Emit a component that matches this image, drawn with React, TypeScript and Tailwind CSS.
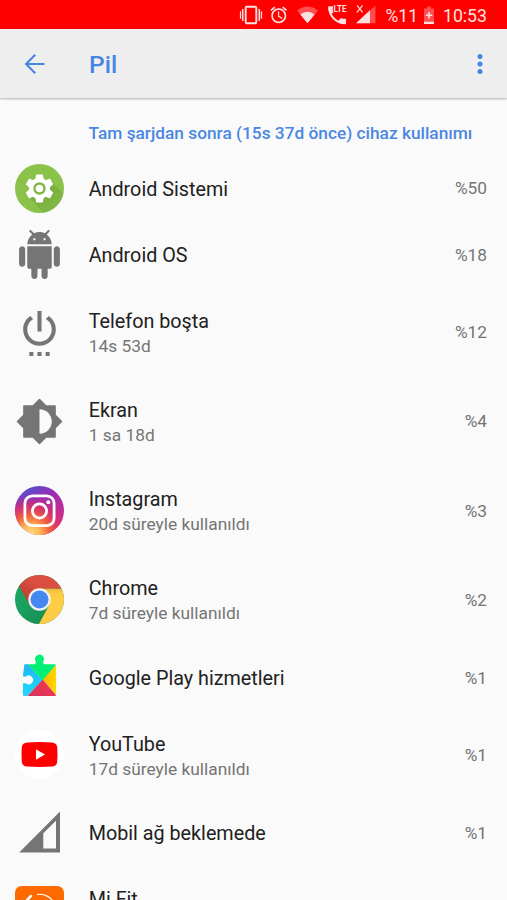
import type { ReactNode } from "react";

interface IUsage {
    name: string,
    percent?: string,
    detail?: string,
    icon: ReactNode,
}

const Gear = () => (
    <svg viewBox="0 0 49 49" className="size-[49px]">
        <defs>
            <linearGradient id="gearShadow" x1="0.3" y1="0.3" x2="0.8" y2="0.9">
                <stop offset="0" stopColor="#689f38" />
                <stop offset="1" stopColor="#7cb342" />
            </linearGradient>
        </defs>
        <circle cx="24.5" cy="24.5" r="24.5" fill="#8bc34a" />
        <path d="M15 34 L28.5 48.6 A24.5 24.5 0 0 0 48.5 29.5 L36.5 18 Z" fill="url(#gearShadow)" opacity="0.6" />
        <g transform="translate(7.7 7.7) scale(1.4)">
            <path
                fill="#fff"
                d="M19.43 12.98c.04-.32.07-.64.07-.98s-.03-.66-.07-.98l2.11-1.65c.19-.15.24-.42.12-.64l-2-3.46c-.12-.22-.39-.3-.61-.22l-2.49 1c-.52-.4-1.08-.73-1.69-.98l-.38-2.65C14.46 2.18 14.25 2 14 2h-4c-.25 0-.46.18-.49.42l-.38 2.65c-.61.25-1.17.59-1.69.98l-2.49-1c-.23-.09-.49 0-.61.22l-2 3.46c-.13.22-.07.49.12.64l2.11 1.65c-.04.32-.07.65-.07.98s.03.66.07.98l-2.11 1.65c-.19.15-.24.42-.12.64l2 3.46c.12.22.39.3.61.22l2.49-1c.52.4 1.08.73 1.69.98l.38 2.65c.03.24.24.42.49.42h4c.25 0 .46-.18.49-.42l.38-2.65c.61-.25 1.17-.59 1.69-.98l2.49 1c.23.09.49 0 .61-.22l2-3.46c.12-.22.07-.49-.12-.64l-2.11-1.65z"
            />
        </g>
        <circle cx="24.5" cy="24.5" r="5" fill="#fff" stroke="#7fb63f" strokeWidth="2.4" />
    </svg>
)

const Robot = () => (
    <svg viewBox="0 0 24 24" className="size-[49px] fill-[#757575]">
        <path d="M6 18c0 .55.45 1 1 1h1v3.5c0 .83.67 1.5 1.5 1.5s1.5-.67 1.5-1.5V19h2v3.5c0 .83.67 1.5 1.5 1.5s1.5-.67 1.5-1.5V19h1c.55 0 1-.45 1-1V8H6v10zM3.5 8C2.67 8 2 8.67 2 9.5v7c0 .83.67 1.5 1.5 1.5S5 17.33 5 16.5v-7C5 8.67 4.33 8 3.5 8zm17 0c-.83 0-1.5.67-1.5 1.5v7c0 .83.67 1.5 1.5 1.5s1.5-.67 1.5-1.5v-7c0-.83-.67-1.5-1.5-1.5zm-4.97-5.84l1.3-1.3c.2-.2.2-.51 0-.71-.2-.2-.51-.2-.71 0l-1.48 1.48C13.85 1.23 12.95 1 12 1c-.96 0-1.86.23-2.66.63L7.85.15c-.2-.2-.51-.2-.71 0-.2.2-.2.51 0 .71l1.31 1.31C6.97 3.26 6 5.01 6 7h12c0-1.99-.97-3.75-2.47-4.84zM10 5H9V4h1v1zm5 0h-1V4h1v1z" />
    </svg>
)

const Power = () => (
    <svg viewBox="0 0 24 24" className="size-[49px] fill-[#757575]">
        <path d="M7 24h2v-2H7v2zm4 0h2v-2h-2v2zm2-22h-2v10h2V2zm3.56 2.44l-1.45 1.45C16.84 6.94 18 8.83 18 11c0 3.31-2.69 6-6 6s-6-2.69-6-6c0-2.17 1.16-4.06 2.88-5.12L7.44 4.44C5.36 5.88 4 8.28 4 11c0 4.42 3.58 8 8 8s8-3.58 8-8c0-2.72-1.36-5.12-3.44-6.56zM15 24h2v-2h-2v2z" />
    </svg>
)

const Brightness = () => (
    <svg viewBox="0 0 24 24" className="size-[49px] fill-[#757575]">
        <path
            stroke="#757575"
            strokeWidth="0.8"
            strokeLinejoin="round"
            d="M19.6 15.15L22.75 12 19.6 8.85V4.4h-4.45L12 1.25 8.85 4.4H4.4v4.45L1.25 12 4.4 15.15V19.6h4.45L12 22.75 15.15 19.6H19.6z"
        />
        <path className="fill-[#fafafa]" d="M12 18V6c3.31 0 6 2.69 6 6s-2.69 6-6 6z" />
    </svg>
)

const Instagram = () => (
    <svg viewBox="0 0 49 49" className="size-[49px]">
        <defs>
            <linearGradient id="igBase" x1="0.2" y1="0" x2="0.75" y2="0.9">
                <stop offset="0" stopColor="#4a55d0" />
                <stop offset="0.4" stopColor="#9c2cb4" />
                <stop offset="1" stopColor="#d62e80" />
            </linearGradient>
            <radialGradient id="igWarm" cx="0.32" cy="1" r="0.85">
                <stop offset="0" stopColor="#ffe08a" />
                <stop offset="0.22" stopColor="#fdbd58" />
                <stop offset="0.45" stopColor="#f4663f" />
                <stop offset="0.72" stopColor="#dc2f68" stopOpacity="0.8" />
                <stop offset="1" stopColor="#b32ba5" stopOpacity="0" />
            </radialGradient>
        </defs>
        <circle cx="24.5" cy="24.5" r="24.5" fill="url(#igBase)" />
        <circle cx="24.5" cy="24.5" r="24.5" fill="url(#igWarm)" />
        <g fill="none" stroke="#fff" strokeWidth="2.8">
            <rect x="9.9" y="9.9" width="29.2" height="29.8" rx="7.5" />
            <circle cx="24.5" cy="25" r="7.1" />
        </g>
        <circle cx="33.3" cy="16.3" r="2" fill="#fff" />
    </svg>
)

const Chrome = () => (
    <svg viewBox="0 0 49 49" className="size-[49px]">
        <defs>
            <clipPath id="chromeClip">
                <circle cx="24.5" cy="24.5" r="24.5" />
            </clipPath>
            <linearGradient id="chromeRed" x1="0" y1="0.6" x2="0.6" y2="0">
                <stop offset="0" stopColor="#bb3e32" />
                <stop offset="0.6" stopColor="#db4e40" />
            </linearGradient>
            <linearGradient id="chromeGreen" x1="0.4" y1="0.3" x2="0.9" y2="0.8">
                <stop offset="0" stopColor="#1ba260" />
                <stop offset="1" stopColor="#168a50" />
            </linearGradient>
            <linearGradient id="chromeYellow" x1="0" y1="0" x2="0" y2="1">
                <stop offset="0" stopColor="#e8b83e" />
                <stop offset="0.15" stopColor="#ffcd45" />
            </linearGradient>
        </defs>
        <g clipPath="url(#chromeClip)">
            <rect width="49" height="49" fill="url(#chromeGreen)" />
            <path d="M24.5 13.4H49V49H24L34.2 30z" fill="url(#chromeYellow)" />
            <path d="M0 0H49V13.4H24.5L14.8 30 3.5 10.5z" fill="url(#chromeRed)" />
        </g>
        <circle cx="24.5" cy="24.5" r="11.2" fill="#f1f1f1" />
        <circle cx="24.5" cy="24.5" r="9" fill="#4688f1" />
    </svg>
)

const Puzzle = () => (
    <svg viewBox="0 0 49 49" className="size-[49px]">
        <defs>
            <clipPath id="puzzleClip">
                <path d="M9.4 11.2H19.8C21 10.4 21.2 9.3 20.6 8.3A4.5 4.5 0 1 1 28.4 8.3C27.8 9.3 28 10.4 29.2 11.2H39.6A1.5 1.5 0 0 1 41.1 12.7V41.6A1.5 1.5 0 0 1 39.6 43.1H9.4A1.5 1.5 0 0 1 7.9 41.6V30.8C8.8 29.8 10 29.9 11 30.6A4.5 4.5 0 1 0 11 23.2C10 23.9 8.8 24 7.9 23Z" />
            </clipPath>
            <linearGradient id="puzzleBlue" x1="0" y1="0" x2="0" y2="1">
                <stop offset="0" stopColor="#21b5f5" />
                <stop offset="1" stopColor="#1fdcfd" />
            </linearGradient>
            <linearGradient id="puzzleRed" x1="1" y1="0" x2="0" y2="1">
                <stop offset="0" stopColor="#fb3a46" />
                <stop offset="1" stopColor="#cf3263" />
            </linearGradient>
            <linearGradient id="puzzleYellow" x1="0" y1="0" x2="1" y2="0">
                <stop offset="0" stopColor="#ffb400" />
                <stop offset="1" stopColor="#ffdc00" />
            </linearGradient>
        </defs>
        <g clipPath="url(#puzzleClip)">
            <path d="M7 10H12L27.8 27.2 10 45H7z" fill="url(#puzzleBlue)" />
            <path d="M42 11L27.8 26.3 42 43z" fill="url(#puzzleYellow)" />
            <path d="M11 44.5L27.8 26.4 43 44.5z" fill="url(#puzzleRed)" />
            <path d="M13 0H45L41.5 11.2 27.5 27.2 13 11.6z" fill="#04ef76" />
        </g>
    </svg>
)

const YouTube = () => (
    <svg viewBox="0 0 49 49" className="size-[49px]">
        <circle cx="24.5" cy="24.5" r="24.5" fill="#fff" />
        <path d="M12 12.4Q24.5 11.6 37 12.4Q41.8 12.8 42.2 17.2Q42.7 24.5 42.2 31.8Q41.8 36.2 37 36.6Q24.5 37.4 12 36.6Q7.2 36.2 6.8 31.8Q6.3 24.5 6.8 17.2Q7.2 12.8 12 12.4Z" fill="#f00" />
        <path d="M21 19.3L30 24.5 21 29.7z" fill="#fff" />
    </svg>
)

const Signal = () => (
    <svg viewBox="0 0 49 49" className="size-[49px]">
        <path fill="#757575" fillRule="evenodd" d="M4.2 44.5H45V3.5zM28.3 25.2L41 12.8V40.4H28.3z" />
    </svg>
)

const MiFit = () => (
    <svg viewBox="0 0 49 49" className="size-[49px]">
        <rect width="49" height="49" rx="6.5" fill="#ff6a00" />
        <path d="M22 8.500A16 16 0 0 1 40 19.500" fill="none" stroke="#fff" strokeWidth="1.2" />
        <path d="M15.8 10.2Q9 16 8.5 25" fill="none" stroke="#fff" strokeWidth="2.8" strokeLinecap="round" />
    </svg>
)

const usage: IUsage[] = [
    { name: "Android Sistemi", percent: "%50", icon: <Gear /> },
    { name: "Android OS", percent: "%18", icon: <Robot /> },
    { name: "Telefon boşta", detail: "14s 53d", percent: "%12", icon: <Power /> },
    { name: "Ekran", detail: "1 sa 18d", percent: "%4", icon: <Brightness /> },
    { name: "Instagram", detail: "20d süreyle kullanıldı", percent: "%3", icon: <Instagram /> },
    { name: "Chrome", detail: "7d süreyle kullanıldı", percent: "%2", icon: <Chrome /> },
    { name: "Google Play hizmetleri", percent: "%1", icon: <Puzzle /> },
    { name: "YouTube", detail: "17d süreyle kullanıldı", percent: "%1", icon: <YouTube /> },
    { name: "Mobil ağ beklemede", percent: "%1", icon: <Signal /> },
    { name: "Mi Fit", detail: "", icon: <MiFit /> },
]

function StatusBar() {
    return (
        <div className="flex h-[29px] shrink-0 items-center bg-[#ff0000] pl-[239px] text-[#ffe0e0]">
            {/* vibrate, alarm, wifi, call, signal */}
            <svg viewBox="0 0 138 29" className="h-[29px] w-[138px] shrink-0" fill="currentColor">
                <rect x="6.7" y="6.7" width="10.6" height="16.6" rx="1" fill="none" stroke="currentColor" strokeWidth="1.9" />
                <path d="M3 9h1.5v12H3zM.9 11.3h1.3v7.4H.9zM19.5 9H21v12h-1.5zM21.8 11.3h1.3v7.4h-1.3z" />
                <g transform="translate(29.8 4.9) scale(0.83)">
                    <path d="M22 5.72l-4.6-3.86-1.29 1.53 4.6 3.86L22 5.72zM7.88 3.39L6.6 1.86 2 5.71l1.29 1.53 4.59-3.85zM12.5 8H11v6l4.75 2.85.75-1.23-4-2.37V8zM12 4c-4.97 0-9 4.03-9 9s4.02 9 9 9c4.97 0 9-4.03 9-9s-4.03-9-9-9zm0 16c-3.87 0-7-3.13-7-7s3.13-7 7-7 7 3.13 7 7-3.13 7-7 7z" />
                </g>
                <path opacity="0.35" d="M58 10.5Q68.5 2.5 79 10.5L68.5 23.3z" />
                <path d="M61.3 14.5Q68.5 9.2 75.7 14.5L68.5 23.3z" />
                <g transform="translate(86.1 3.3) scale(1)">
                    <path d="M20 15.5c-1.25 0-2.45-.2-3.57-.57-.35-.11-.74-.03-1.02.24l-2.2 2.2c-2.83-1.44-5.15-3.75-6.59-6.59l2.2-2.21c.28-.26.36-.65.25-1C8.7 6.45 8.5 5.25 8.5 4c0-.55-.45-1-1-1H4c-.55 0-1 .45-1 1 0 9.39 7.61 17 17 17 .55 0 1-.45 1-1v-3.5c0-.55-.45-1-1-1z" />
                </g>
                <rect x="93.9" y="4.5" width="14" height="7.6" fill="#ff0000" />
                <text x="94.6" y="11.500" textLength="12.8" lengthAdjust="spacingAndGlyphs" className="text-[8.5px] font-bold">LTE</text>
                <path opacity="0.35" d="M117 23.2H136.4V5.4z" />
                <path d="M117 23.2H131V10.2z" />
                <path d="M118 5.4L123.6 12.4M123.6 5.4L118 12.4" stroke="currentColor" strokeWidth="1.2" />
            </svg>
            <span className="ml-[8.5px] mt-[3px] w-[38.5px] text-[17.5px]">%11</span>
            <svg viewBox="0 0 10 20" className="h-5 w-[10px]" fill="currentColor">
                <path opacity="0.35" d="M3 1.5h4v2h3V16H0V3.500h3z" />
                <path d="M0 16.500h10V19H0zM4.200 7h1.6v2.500h2.400v1.600H5.800v2.500H4.200v-2.500H1.800V9.500h2.400z" />
            </svg>
            <span className="ml-[9px] mt-[3px] text-[17.6px]">10:53</span>
        </div>
    )
}

export default function App() {
    return (
        <div className="flex h-[900px] w-[507px] flex-col overflow-hidden bg-[#fafafa] font-['Roboto',sans-serif]">
            <StatusBar />
            <header className="z-10 flex h-[69px] shrink-0 items-center bg-[#eeeeee] text-[#4685e2] shadow-[0_1px_2px_rgba(0,0,0,0.3)]">
                <svg viewBox="0 0 20 20" className="ml-[25px] size-5" fill="none" stroke="currentColor" strokeWidth="2.2">
                    <path d="M19.500 10H1.500M10.200 .8L1 10l9.200 9.200" />
                </svg>
                <h1 className="ml-11 mt-1 flex-1 text-[24.5px] font-medium">Pil</h1>
                <svg viewBox="0 0 6 20" className="mr-6 h-5 w-[6px]" fill="currentColor">
                    <circle cx="3" cy="2.5" r="2.5" />
                    <circle cx="3" cy="10" r="2.5" />
                    <circle cx="3" cy="17.500" r="2.5" />
                </svg>
            </header>
            <h2 className="flex h-[57px] shrink-0 items-center pl-[88.6px] pt-[15.8px] text-[17.3px] font-medium whitespace-nowrap text-[#4a87e2]">
                Tam şarjdan sonra (15s 37d önce) cihaz kullanımı
            </h2>
            <div className="flex flex-col">
                {usage.map((e) => (
                    <div
                        key={e.name}
                        className={`flex shrink-0 items-center pl-[15px] pr-5 ${e.detail !== undefined ? "h-[89.2px]" : "h-[66.2px]"}`}
                    >
                        {e.icon}
                        <div className="ml-[24.7px] flex-1 pt-[2.6px] whitespace-nowrap">
                            <div className="text-[19.75px] leading-[25px] text-[#212121]">{e.name}</div>
                            {e.detail !== undefined && <div className="h-6 text-[17.35px] leading-[24px] text-[#757575]">{e.detail}</div>}
                        </div>
                        <div className="pt-[2.6px] text-[17.3px] text-[#757575]">{e.percent}</div>
                    </div>
                ))}
            </div>
        </div>
    )
}
